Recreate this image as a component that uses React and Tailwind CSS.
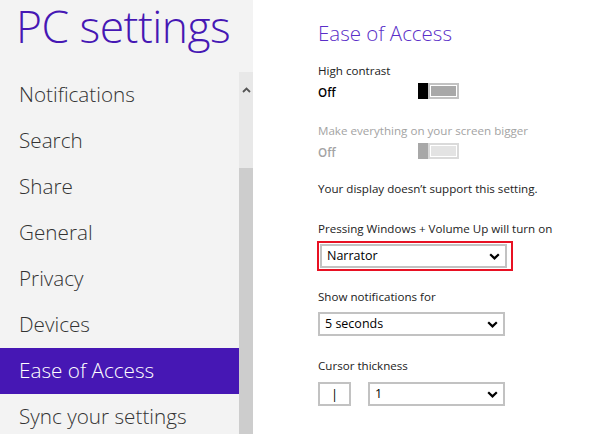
import React from "react";

const navigation = ["Notifications", "Search", "Share", "General", "Privacy", "Devices", "Ease of Access", "Sync your settings"];

function Chevron() {
  return (
    <svg width="11" height="7" viewBox="0 0 11 7" className="shrink-0">
      <path d="M1.2 1.2 L5.5 5.4 L9.8 1.2" fill="none" stroke="#000" strokeWidth="2.2" />
    </svg>
  );
}

function Select({ value, className = "w-[187px]" }) {
  return (
    <div className={`flex h-[24px] items-center justify-between border-2 border-[#c2c2c2] bg-white pl-[5px] pr-[5px] text-[12.5px] text-black ${className}`}>
      <span>{value}</span>
      <Chevron />
    </div>
  );
}

function Toggle({ disabled }) {
  return (
    <div className="flex h-[16px] w-[41px]">
      <div className={`w-[10px] ${disabled ? "bg-[#a8a8a8]" : "bg-black"}`} />
      <div className={`flex-1 border-2 p-[1px] bg-white ${disabled ? "border-[#dadada]" : "border-[#c2c2c2]"}`}>
        <div className={`h-full ${disabled ? "bg-[#e3e3e3]" : "bg-[#a8a8a8]"}`} />
      </div>
    </div>
  );
}

export default function App() {
  return (
    <div className="flex h-[434px] w-[600px] overflow-hidden bg-white" style={{ fontFamily: '"Open Sans", "Noto Sans", sans-serif' }}>
      <aside className="flex w-[253px] shrink-0 flex-col bg-[#f3f3f3]">
        <div className="h-[72px] shrink-0 pl-[16px] pt-[2px]">
          <h1 className="text-[44.4px] font-light leading-[48px] tracking-[-0.5px] text-[#4617b4]">PC settings</h1>
        </div>
        <div className="flex flex-1">
          <nav className="flex flex-1 flex-col">
            {navigation.map((label) => (
              <div key={label} className={`flex h-[46px] shrink-0 items-center pl-[19px] text-[20.7px] font-light ${label === "Ease of Access" ? "bg-[#4617b4] text-white" : "text-[#333]"}`}>
                {label}
              </div>
            ))}
          </nav>
          <div className="flex w-[14px] flex-col">
            <div className="flex h-[96px] justify-center bg-[#e8e8e8] pt-[15px]">
              <svg width="9" height="6" viewBox="0 0 9 6">
                <path d="M1 5 L4.5 1.5 L8 5" fill="none" stroke="#555" strokeWidth="1.8" />
              </svg>
            </div>
            <div className="flex-1 bg-[#cdcdcd]" />
          </div>
        </div>
      </aside>

      <main className="flex-1 pl-[65px] pt-[17px] text-[11.6px] leading-[20px] text-[#222]">
        <h2 className="text-[20.5px] font-light leading-[32px] text-[#5a2ec8]">Ease of Access</h2>

        <div className="mt-[12px]">High contrast</div>
        <div className="mt-[2px] flex h-[20px] items-start">
          <span className="w-[100px] font-semibold text-black">Off</span>
          <Toggle />
        </div>

        <div className="mt-[18px] text-[#a3a3a3]">Make everything on your screen bigger</div>
        <div className="mt-[2px] flex h-[20px] items-start">
          <span className="w-[100px] font-semibold text-[#a3a3a3]">Off</span>
          <Toggle disabled />
        </div>

        <div className="mt-[16px]">Your display doesn’t support this setting.</div>

        <div className="mt-[20px]">Pressing Windows + Volume Up will turn on</div>
        <div className="ml-[-1px] mt-[2px] w-[196px] border-2 border-[#e81123] py-[1px] pl-[1px]">
          <Select value="Narrator" className="w-[187px]" />
        </div>

        <div className="mt-[16px]">Show notifications for</div>
        <div className="mt-[5px]">
          <Select value="5 seconds" />
        </div>

        <div className="mt-[20px]">Cursor thickness</div>
        <div className="mt-[6px] flex gap-[17px]">
          <div className="flex h-[24px] w-[33px] items-center justify-center border-2 border-[#c2c2c2] text-[13px] text-black">|</div>
          <Select value="1" className="w-[137px]" />
        </div>
      </main>
    </div>
  );
}
